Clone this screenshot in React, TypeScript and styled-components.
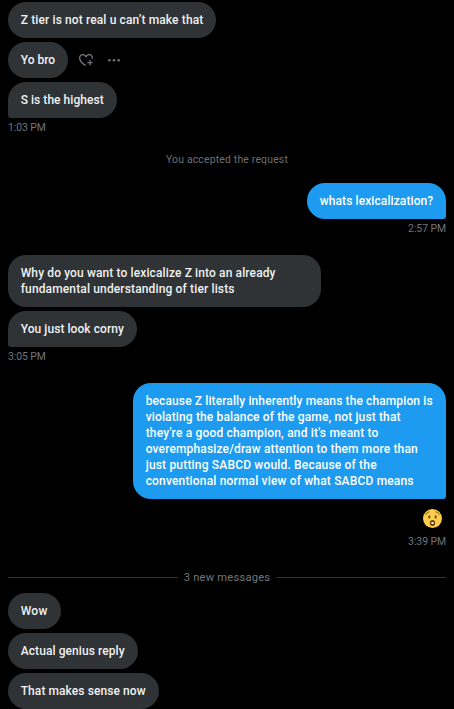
import React from 'react';
import styled, { createGlobalStyle } from 'styled-components';

type Side = 'in' | 'out';
type TextLine = { text: string; tracking: number };

const GlobalStyle = createGlobalStyle`
  * { box-sizing: border-box; }
  html, body { margin: 0; background: #000; }
  body { overflow: hidden; }
`;

const Conversation = styled.main`
  display: flex;
  flex-direction: column;
  width: 454px;
  height: 709px;
  padding: 2px 8px 0;
  overflow: hidden;
  background: #000;
  font-family: Roboto, 'Liberation Sans', sans-serif;
`;

const Group = styled.section<{ $side: Side; $gapAfter: number }>`
  display: flex;
  flex-direction: column;
  flex-shrink: 0;
  align-items: ${({ $side }) => ($side === 'in' ? 'flex-start' : 'flex-end')};
  gap: 4px;
  margin-bottom: ${({ $gapAfter }) => $gapAfter}px;
`;

const MessageRow = styled.div`
  display: flex;
  align-items: center;
`;

const Bubble = styled.div<{ $side: Side; $tail?: boolean; $width: number }>`
  width: ${({ $width }) => $width}px;
  padding: 10px 0 10px 12.7px;
  border-radius: 18px;
  ${({ $side, $tail }) =>
    $tail && `border-bottom-${$side === 'in' ? 'left' : 'right'}-radius: 3px;`}
  background: ${({ $side }) => ($side === 'in' ? '#2f3336' : '#1d9bf0')};
  color: ${({ $side }) => ($side === 'in' ? '#f0f1f2' : '#fff')};
  font-size: 12px;
  font-weight: 500;
  line-height: 16px;
  white-space: nowrap;
`;

const Line = styled.span<{ $tracking: number }>`
  display: block;
  letter-spacing: ${({ $tracking }) => $tracking}px;
`;

const Timestamp = styled.time`
  height: 12px;
  color: #71767b;
  font-size: 10.4px;
  line-height: 12px;
  letter-spacing: -0.05px;
`;

const Notice = styled.p`
  flex-shrink: 0;
  margin: 0 0 17px;
  color: #6b7075;
  font-size: 10.4px;
  line-height: 12px;
  letter-spacing: 0.19px;
  text-align: center;
`;

const NewMessages = styled.div`
  display: flex;
  flex-shrink: 0;
  align-items: center;
  height: 16px;
  margin-bottom: 8px;
  color: #71767b;
  font-size: 11.2px;
  line-height: 16px;
  letter-spacing: 0.2px;
  white-space: nowrap;
`;

const Rule = styled.span`
  flex: 1;
  height: 1px;
  background: #2f3336;
`;

const NewMessagesLabel = styled.span`
  width: 98px;
  padding-top: 2px;
  text-align: center;
`;

const Actions = styled.div`
  display: flex;
  align-items: center;
  gap: 12px;
  margin-left: 10px;
  color: #71767b;
`;

const ActionIcon = styled.svg`
  display: block;
  width: 16px;
  height: 16px;
`;

const Emoji = styled.svg`
  display: block;
  width: 19px;
  height: 19px;
  margin: 6px 4px 4px 0;
`;

function Message({ side, width, lines, tail }: {
  side: Side; width: number; lines: TextLine[]; tail?: boolean;
}) {
  return (
    <Bubble $side={side} $tail={tail} $width={width}>
      {lines.map(({ text, tracking }) => (
        <Line key={text} $tracking={tracking}>{text}</Line>
      ))}
    </Bubble>
  );
}

function AddReactionIcon() {
  return (
    <ActionIcon viewBox="0 0 24 24" fill="currentColor" aria-label="React">
      <path d="M17 12v3h-2.998v2h3v3h2v-3h3v-2h-3.001v-3H17zm-5-6.839c-1.154-1.215-2.994-2.24-5.172-2.153-3.163.127-5.327 2.772-5.327 5.992 0 4.727 4.13 8.942 9.51 12.157l1.026-1.716C6.886 16.341 3.5 12.71 3.5 9c0-2.226 1.419-3.917 3.408-3.994 1.906-.074 3.343 1.244 4.245 2.71h1.694c.902-1.466 2.339-2.784 4.245-2.71C19.081 5.083 20.5 6.774 20.5 9c0 .34-.03.674-.083 1h2.02c.042-.328.063-.661.063-1 0-3.22-2.164-5.865-5.327-5.992C14.994 2.921 13.154 3.946 12 5.161z" />
    </ActionIcon>
  );
}

function MoreIcon() {
  return (
    <ActionIcon viewBox="0 0 24 24" fill="currentColor" aria-label="More">
      <circle cx="5" cy="12.5" r="1.9" />
      <circle cx="12" cy="12.5" r="1.9" />
      <circle cx="19" cy="12.5" r="1.9" />
    </ActionIcon>
  );
}

function AstonishedFace() {
  return (
    <Emoji viewBox="0 0 36 36" role="img" aria-label="Astonished face">
      <circle cx="18" cy="18" r="18" fill="#ffcc4d" />
      <ellipse cx="18" cy="26.5" rx="5" ry="5.8" fill="#664500" />
      <ellipse cx="18" cy="26.5" rx="2.5" ry="2" fill="#fff" />
      <ellipse cx="12" cy="15" rx="2" ry="3.2" fill="#664500" />
      <ellipse cx="24" cy="15" rx="2" ry="3.2" fill="#664500" />
      <path d="M5.500 10.500c1-3 3-4.700 6-5M30.500 10.500c-1-3-3-4.700-6-5" fill="none" stroke="#664500" strokeWidth="1.7" strokeLinecap="round" />
    </Emoji>
  );
}

export default function App() {
  return (
    <>
      <GlobalStyle />
      <Conversation>
        <Group $side="in" $gapAfter={20}>
          <Message side="in" width={208} lines={[{ text: 'Z tier is not real u can’t make that', tracking: 0.12 }]} />
          <MessageRow>
            <Message side="in" width={60} lines={[{ text: 'Yo bro', tracking: 0 }]} />
            <Actions>
              <AddReactionIcon />
              <MoreIcon />
            </Actions>
          </MessageRow>
          <Message side="in" tail width={109} lines={[{ text: 'S is the highest', tracking: 0.04 }]} />
          <Timestamp>1:03 PM</Timestamp>
        </Group>
        <Notice>You accepted the request</Notice>
        <Group $side="out" $gapAfter={20}>
          <Message side="out" tail width={139} lines={[{ text: 'whats lexicalization?', tracking: 0.1 }]} />
          <Timestamp>2:57 PM</Timestamp>
        </Group>
        <Group $side="in" $gapAfter={20}>
          <Message
            side="in"
            width={313}
            lines={[
              { text: 'Why do you want to lexicalize Z into an already', tracking: 0.12 },
              { text: 'fundamental understanding of tier lists', tracking: 0.14 },
            ]}
          />
          <Message side="in" tail width={129} lines={[{ text: 'You just look corny', tracking: 0.06 }]} />
          <Timestamp>3:05 PM</Timestamp>
        </Group>
        <Group $side="out" $gapAfter={21}>
          <Message
            side="out"
            tail
            width={313}
            lines={[
              { text: 'because Z literally inherently means the champion is', tracking: 0.115 },
              { text: 'violating the balance of the game, not just that', tracking: 0.137 },
              { text: "they're a good champion, and it's meant to", tracking: 0.18 },
              { text: 'overemphasize/draw attention to them more than', tracking: 0.15 },
              { text: 'just putting SABCD would. Because of the', tracking: 0.18 },
              { text: 'conventional normal view of what SABCD means', tracking: 0.17 },
            ]}
          />
          <AstonishedFace />
          <Timestamp>3:39 PM</Timestamp>
        </Group>
        <NewMessages>
          <Rule />
          <NewMessagesLabel>3 new messages</NewMessagesLabel>
          <Rule />
        </NewMessages>
        <Group $side="in" $gapAfter={0}>
          <Message side="in" width={53} lines={[{ text: 'Wow', tracking: 0.3 }]} />
          <Message side="in" width={130} lines={[{ text: 'Actual genius reply', tracking: 0.08 }]} />
          <Message side="in" width={151} lines={[{ text: 'That makes sense now', tracking: 0.08 }]} />
        </Group>
      </Conversation>
    </>
  );
}
